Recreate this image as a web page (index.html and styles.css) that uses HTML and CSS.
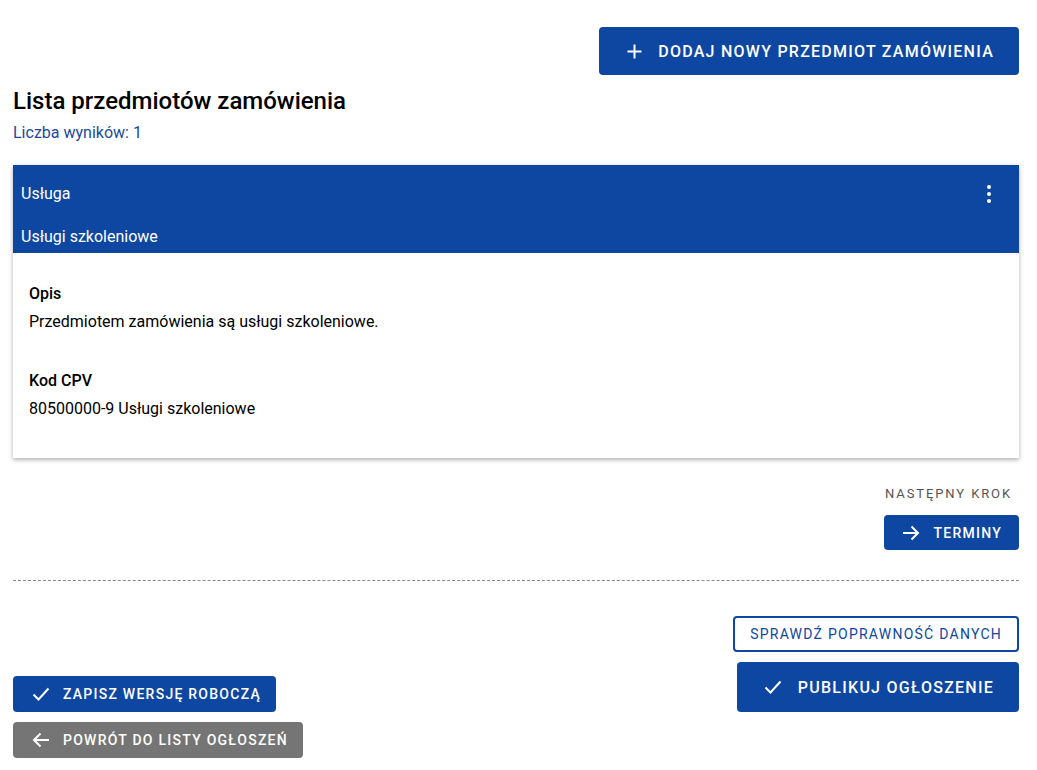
FILE: index.html
```html
<!DOCTYPE html>
<html lang="pl">
<head>
<meta charset="utf-8">
<link rel="stylesheet" href="styles.css">
</head>
<body>
<div class="page">
  <div class="top-row">
    <button class="btn btn-primary btn-lg">
      <svg class="ico" width="15" height="15" viewBox="0 0 15 15"><path d="M7.5 0.5v14M0.5 7.5h14" stroke="#fff" stroke-width="2" fill="none"/></svg>
      <span>Dodaj nowy przedmiot zamówienia</span>
    </button>
  </div>
  <h1 class="title">Lista przedmiotów zamówienia</h1>
  <div class="count">Liczba wyników: 1</div>

  <div class="card">
    <div class="card-head">
      <div class="head-row">
        <span>Usługa</span>
        <svg class="kebab" width="6" height="18" viewBox="0 0 6 18"><circle cx="3" cy="2" r="2" fill="#fff"/><circle cx="3" cy="9" r="2" fill="#fff"/><circle cx="3" cy="16" r="2" fill="#fff"/></svg>
      </div>
      <div class="head-sub">Usługi szkoleniowe</div>
    </div>
    <div class="card-body">
      <div class="field">
        <div class="label">Opis</div>
        <div class="value">Przedmiotem zamówienia są usługi szkoleniowe.</div>
      </div>
      <div class="field">
        <div class="label">Kod CPV</div>
        <div class="value">80500000-9 Usługi szkoleniowe</div>
      </div>
    </div>
  </div>

  <div class="next">
    <div class="next-label">Następny krok</div>
    <button class="btn btn-primary btn-sm">
      <svg class="ico" width="18" height="16" viewBox="0 0 18 16"><path d="M1 8h15M9.5 1.5 16 8l-6.5 6.5" stroke="#fff" stroke-width="2" fill="none"/></svg>
      <span>Terminy</span>
    </button>
  </div>

  <hr class="divider">

  <div class="bottom">
    <div class="bottom-left">
      <button class="btn btn-primary btn-sm btn-save">
        <svg class="ico" width="18" height="14" viewBox="0 0 18 14"><path d="M1.5 7.5 6.5 12.5 16.5 1.5" stroke="#fff" stroke-width="2" fill="none"/></svg>
        <span>Zapisz wersję roboczą</span>
      </button>
      <button class="btn btn-gray btn-sm btn-back">
        <svg class="ico" width="18" height="16" viewBox="0 0 18 16"><path d="M17 8H2M8.5 1.5 2 8l6.5 6.5" stroke="#fff" stroke-width="2" fill="none"/></svg>
        <span>Powrót do listy ogłoszeń</span>
      </button>
    </div>
    <div class="bottom-right">
      <button class="btn btn-outline btn-sm">Sprawdź poprawność danych</button>
      <button class="btn btn-primary btn-xl">
        <svg class="ico" width="18" height="14" viewBox="0 0 18 14"><path d="M1.5 7.5 6.5 12.5 16.5 1.5" stroke="#fff" stroke-width="2" fill="none"/></svg>
        <span>Publikuj ogłoszenie</span>
      </button>
    </div>
  </div>
</div>
</body>
</html>
```

FILE: styles.css
```css
* { box-sizing: border-box; }
html, body { margin: 0; padding: 0; background: #fff; }
body { font-family: Roboto, "Noto Sans", Arial, sans-serif; color: #000; }
.page { padding: 27px 18px 0 13px; }

.top-row { display: flex; justify-content: flex-end; }

.btn {
  display: inline-flex; align-items: center; justify-content: center;
  border: none; border-radius: 4px; font-family: Roboto, Arial, sans-serif;
  font-weight: 500; text-transform: uppercase; cursor: pointer;
  letter-spacing: 1.25px; white-space: nowrap;
}
.btn-primary { background: #0d47a1; color: #fff; }
.btn-gray { background: #757575; color: #fff; }
.btn-lg { height: 48px; padding: 0 25px 0 28px; font-size: 16px; gap: 16px; }
.btn-sm { height: 36px; padding: 0 17px 0 19px; font-size: 14px; gap: 13px; }
.btn-outline { background: #fff; color: #0d47a1; border: 2px solid #0d47a1; padding: 0 15px; font-weight: 400; letter-spacing: 1.25px; }
.btn-save { padding-right: 15px; }
.btn-back { padding-right: 15px; }
.btn-xl { height: 50px; padding: 0 25px 0 27px; font-size: 16px; gap: 16px; }
.ico { display: block; flex: none; }

.title { font-size: 24px; font-weight: 500; margin: 12px 0 0; line-height: 28px; }
.count { color: #1b4a9c; font-size: 16px; margin-top: 8px; line-height: 20px; }

.card { margin-top: 22px; box-shadow: 0 2px 4px rgba(0,0,0,.25), 0 1px 6px rgba(0,0,0,.08); background: #fff; }
.card-head { background: #0d47a1; color: #fff; font-size: 16px; padding: 0 27px 0 8px; }
.head-row { display: flex; justify-content: space-between; align-items: center; height: 57px; }
.kebab { display: block; }
.head-sub { height: 31px; padding-top: 4px; line-height: 22px; }

.card-body { padding: 30px 16px 38px; font-size: 16px; }
.field { margin-bottom: 37px; }
.field:last-child { margin-bottom: 0; }
.label { font-weight: 500; line-height: 22px; }
.value { margin-top: 6px; line-height: 22px; }

.next { display: flex; flex-direction: column; align-items: flex-end; margin-top: 28px; }
.next-label { font-size: 13px; letter-spacing: 1.9px; text-transform: uppercase; color: #555; margin-right: 7px; line-height: 16px; }
.next .btn { margin-top: 13px; height: 35px; padding: 0 17px 0 18px; }

.divider { border: none; border-top: 1px dashed #888; margin: 30px 0 0; }

.bottom { display: flex; justify-content: space-between; align-items: flex-end; margin-top: 35px; }
.bottom-left { display: flex; flex-direction: column; align-items: flex-start; gap: 10px; }
.bottom-right { display: flex; flex-direction: column; align-items: flex-end; gap: 10px; margin-bottom: 46px; }
```
